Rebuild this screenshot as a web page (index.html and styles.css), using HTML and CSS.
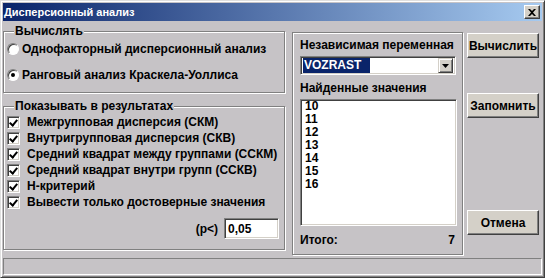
FILE: index.html
```html
<!DOCTYPE html>
<html>
    <head>
        <meta charset="utf-8">
        <link rel="stylesheet" href="styles.css">
    </head>
    <body>
        <div class="window">
            <div class="titlebar">
                <span class="title">Дисперсионный анализ</span>
                <span class="close-btn">
                    <svg width="8" height="7" viewBox="0 0 8 7">
                        <path d="M0 0h2l2 2 2-2h2L5 3.5 8 7H6L4 5 2 7H0l3-3.5z" fill="#000"/>
                    </svg>
                </span>
            </div>

            <div class="content">
                <div class="left-col">
                    <div class="group calc">
                        <span class="legend">Вычислять</span>
                        <div class="radio-row">
                            <span class="radio"></span>
                            <span>Однофакторный дисперсионный анализ</span>
                        </div>
                        <div class="radio-row">
                            <span class="radio checked"></span>
                            <span>Ранговый анализ Краскела-Уоллиса</span>
                        </div>
                    </div>

                    <div class="group show">
                        <span class="legend">Показывать в результатах</span>
                        <div class="check-row"><span class="checkbox"></span>Межгрупповая дисперсия (СКМ)</div>
                        <div class="check-row"><span class="checkbox"></span>Внутригрупповая дисперсия (СКВ)</div>
                        <div class="check-row"><span class="checkbox"></span>Средний квадрат между группами (ССКМ)</div>
                        <div class="check-row"><span class="checkbox"></span>Средний квадрат внутри групп (ССКВ)</div>
                        <div class="check-row"><span class="checkbox"></span>H-критерий</div>
                        <div class="check-row"><span class="checkbox"></span>Вывести только достоверные значения</div>
                        <div class="p-row">
                            <span>(p&lt;)</span>
                            <span class="field p-field">0,05</span>
                        </div>
                    </div>
                </div>

                <div class="group var">
                    <div class="var-label">Независимая переменная</div>
                    <div class="field combo">
                        <span class="selected">VOZRAST</span>
                        <span class="drop-btn">
                            <svg width="7" height="4" viewBox="0 0 7 4"><path d="M0 0h7L3.5 4z" fill="#000"/></svg>
                        </span>
                    </div>
                    <div class="var-label found">Найденные значения</div>
                    <div class="field listbox">
                        <div>10</div>
                        <div>11</div>
                        <div>12</div>
                        <div>13</div>
                        <div>14</div>
                        <div>15</div>
                        <div>16</div>
                    </div>
                    <div class="total">
                        <span>Итого:</span>
                        <span>7</span>
                    </div>
                </div>

                <div class="buttons">
                    <button class="btn btn-calc">Вычислить</button>
                    <button class="btn btn-save">Запомнить</button>
                    <button class="btn btn-cancel">Отмена</button>
                </div>
            </div>

            <div class="statusbar"></div>
        </div>
    </body>
</html>
```

FILE: styles.css
```css
body {
    margin: 0;
    font-family: "Liberation Sans", Arial, sans-serif;
    font-size: 12px;
    font-weight: bold;
    color: #000;
    background-color: #c6c3c6;
}

.window {
    width: 545px;
    height: 278px;
    box-sizing: border-box;
    display: flex;
    flex-direction: column;
    padding: 2px;
    border: 1px solid;
    border-color: #dfdfdf #404040 #404040 #dfdfdf;
    box-shadow: inset 1px 1px #fff, inset -1px -1px #808080;
    background-color: #c6c3c6;
}

.titlebar {
    height: 18px;
    display: flex;
    align-items: center;
    justify-content: space-between;
    padding: 0 2px 0 1px;
    background: linear-gradient(to right, #0a246a, #a6caf0);
}

.title {
    color: #fff;
    font-size: 11px;
    font-weight: bold;
}

.close-btn {
    width: 16px;
    height: 14px;
    box-sizing: border-box;
    display: flex;
    align-items: center;
    justify-content: center;
    background-color: #d4d0c8;
    border: 1px solid;
    border-color: #fff #404040 #404040 #fff;
    box-shadow: inset -1px -1px #808080;
}

.content {
    display: flex;
    align-items: flex-start;
}

.left-col {
    width: 282px;
    display: flex;
    flex-direction: column;
}

.group {
    box-sizing: border-box;
    border: 1px solid #808080;
    box-shadow: inset 1px 1px #fff, 1px 1px #fff;
}

.legend {
    display: table;
    margin: -7px 0 0 7px;
    padding: 0 1px;
    line-height: 13px;
    background-color: #c6c3c6;
}

.calc {
    margin-top: 10px;
    padding: 0 0 4px 3px;
}

.calc .legend {
    margin-bottom: -2px;
}

.radio-row {
    height: 26px;
    display: flex;
    align-items: center;
    gap: 3px;
}

.radio {
    width: 12px;
    height: 12px;
    box-sizing: border-box;
    border-radius: 50%;
    border: 1px solid;
    border-color: #808080 #fff #fff #808080;
    background-color: #fff;
    box-shadow: inset 1px 1px #404040;
    display: flex;
    align-items: center;
    justify-content: center;
}

.radio.checked::after {
    content: "";
    width: 4px;
    height: 4px;
    border-radius: 50%;
    background-color: #000;
}

.show {
    margin-top: 13px;
    padding: 0 5px 10px 3px;
}

.show .legend {
    margin-bottom: 1px;
}

.check-row {
    height: 16px;
    display: flex;
    align-items: center;
    gap: 7px;
}

.checkbox {
    width: 13px;
    height: 13px;
    box-sizing: border-box;
    border: 1px solid;
    border-color: #808080 #fff #fff #808080;
    box-shadow: inset 1px 1px #404040, inset -1px -1px #d4d0c8;
    background-color: #fff;
    position: relative;
}

.checkbox::after {
    content: "";
    position: absolute;
    left: 3px;
    top: 1px;
    width: 3px;
    height: 6px;
    border: solid #000;
    border-width: 0 2px 2px 0;
    transform: rotate(40deg);
}

.p-row {
    margin-top: 8px;
    display: flex;
    justify-content: flex-end;
    align-items: center;
    gap: 6px;
}

.field {
    box-sizing: border-box;
    border: 1px solid;
    border-color: #808080 #fff #fff #808080;
    box-shadow: inset 1px 1px #404040, inset -1px -1px #d4d0c8;
    background-color: #fff;
}

.p-field {
    width: 55px;
    height: 21px;
    padding: 3px 0 0 3px;
}

.var {
    width: 171px;
    margin: 11px 0 0 7px;
    padding: 6px 0 7px 7px;
    display: flex;
    flex-direction: column;
}

.var-label {
    line-height: 13px;
}

.found {
    margin-top: 7px;
}

.combo {
    width: 156px;
    height: 19px;
    margin-top: 4px;
    padding: 2px;
    display: flex;
    justify-content: space-between;
    align-items: center;
}

.selected {
    height: 15px;
    line-height: 15px;
    padding: 0 4px 0 1px;
    width: 62px;
    color: #fff;
    background-color: #0a246a;
}

.drop-btn {
    width: 15px;
    height: 15px;
    box-sizing: border-box;
    display: flex;
    align-items: center;
    justify-content: center;
    background-color: #d4d0c8;
    border: 1px solid;
    border-color: #d4d0c8 #404040 #404040 #d4d0c8;
    box-shadow: inset 1px 1px #fff, inset -1px -1px #808080;
}

.listbox {
    width: 157px;
    height: 127px;
    margin-top: 4px;
    padding: 0 0 0 4px;
    line-height: 13px;
}

.total {
    margin-top: 8px;
    width: 155px;
    line-height: 13px;
    display: flex;
    justify-content: space-between;
}

.buttons {
    margin: 12px 0 0 4px;
    display: flex;
    flex-direction: column;
}

.btn {
    width: 72px;
    height: 25px;
    padding: 0;
    font-family: inherit;
    font-size: 12px;
    font-weight: bold;
    color: #000;
    background-color: #d4d0c8;
    border: 1px solid;
    border-color: #fff #404040 #404040 #fff;
    box-shadow: inset -1px -1px #808080;
}

.btn-save {
    margin-top: 35px;
}

.btn-cancel {
    margin-top: 92px;
}

.statusbar {
    margin-top: auto;
    height: 17px;
    box-sizing: border-box;
    border: 1px solid;
    border-color: #808080 #fff #fff #808080;
}
```
